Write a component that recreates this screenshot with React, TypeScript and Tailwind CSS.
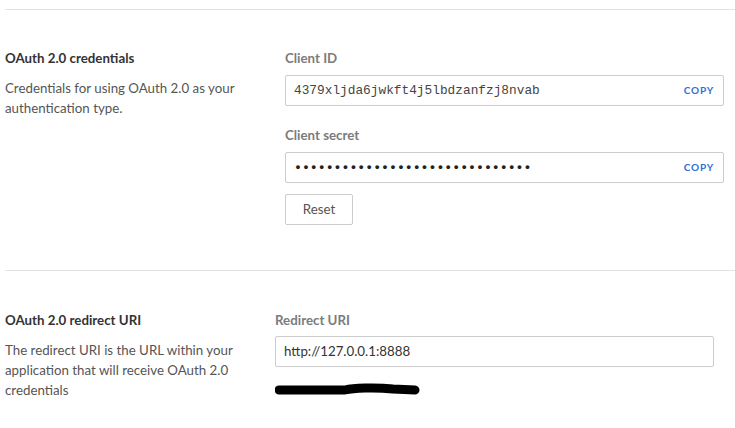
const lato = { fontFamily: "Lato, 'Open Sans', sans-serif" };

function CopyField({ value, dots }: { value: string; dots?: boolean }) {
  return (
    <div className="flex h-[31px] w-[439px] items-center justify-between rounded-[2px] border border-[#cccccc] bg-white pl-[8px] pr-[9px]">
      <span
        className={
          dots
            ? "font-['Liberation_Mono',monospace] text-[13.2px] font-bold text-[#222222]"
            : "font-['Liberation_Mono',monospace] text-[12.8px] text-[#444444]"
        }
      >
        {value}
      </span>
      <button className="text-[10px] font-bold tracking-[0.08em] text-[#2f6fd8]">
        COPY
      </button>
    </div>
  );
}

function Label({ children }: { children: string }) {
  return (
    <div className="h-5 text-[13.3px] leading-5 font-bold text-[#7b7b7b]">
      {children}
    </div>
  );
}

export default function App() {
  return (
    <div
      className="min-h-screen w-[735px] bg-white pl-[5px] text-[#333333]"
      style={lato}
    >
      <div className="pt-[9px]">
        <div className="border-t border-[#e3e3e3]" />
      </div>

      {/* credentials */}
      <section className="flex pt-[38px] pb-[45px]">
        <div className="w-[280px]">
          <h2 className="h-5 text-[13.3px] leading-5 font-bold text-[#333333]">
            OAuth 2.0 credentials
          </h2>
          <p className="mt-[10px] w-[245px] text-[13.3px] leading-5 text-[#555555]">
            Credentials for using OAuth 2.0 as your authentication type.
          </p>
        </div>
        <div className="flex flex-col">
          <Label>Client ID</Label>
          <div className="mt-[7px]">
            <CopyField value="4379xljda6jwkft4j5lbdzanfzj8nvab" />
          </div>
          <div className="mt-[19px]">
            <Label>Client secret</Label>
          </div>
          <div className="mt-[7px]">
            <CopyField value={"•".repeat(30)} dots />
          </div>
          <button className="mt-[11px] h-[31px] w-[68px] rounded-[2px] border border-[#cccccc] bg-white text-[13.3px] text-[#555555]">
            Reset
          </button>
        </div>
      </section>

      <div className="border-t border-[#e3e3e3]" />

      {/* redirect */}
      <section className="flex pt-[39px]">
        <div className="w-[270px]">
          <h2 className="h-5 text-[13.3px] leading-5 font-bold text-[#333333]">
            OAuth 2.0 redirect URI
          </h2>
          <p className="mt-[10px] w-[245px] text-[13.3px] leading-5 text-[#555555]">
            The redirect URI is the URL within your application that will
            receive OAuth 2.0 credentials
          </p>
        </div>
        <div className="flex flex-col">
          <Label>Redirect URI</Label>
          <div className="mt-[6px] flex h-[31px] w-[439px] items-center rounded-[2px] border border-[#cccccc] bg-white pl-[8px] text-[13.3px] text-[#333333]">
            http://127.0.0.1:8888
          </div>
          <svg
            className="mt-[15px]"
            width="148"
            height="14"
            viewBox="0 0 148 14"
          >
            <path
              d="M4 8 L70 8 C78 6 100 5 118 7 L140 8"
              stroke="#000"
              strokeWidth="9"
              strokeLinecap="round"
              strokeLinejoin="round"
              fill="none"
            />
          </svg>
        </div>
      </section>
    </div>
  );
}
